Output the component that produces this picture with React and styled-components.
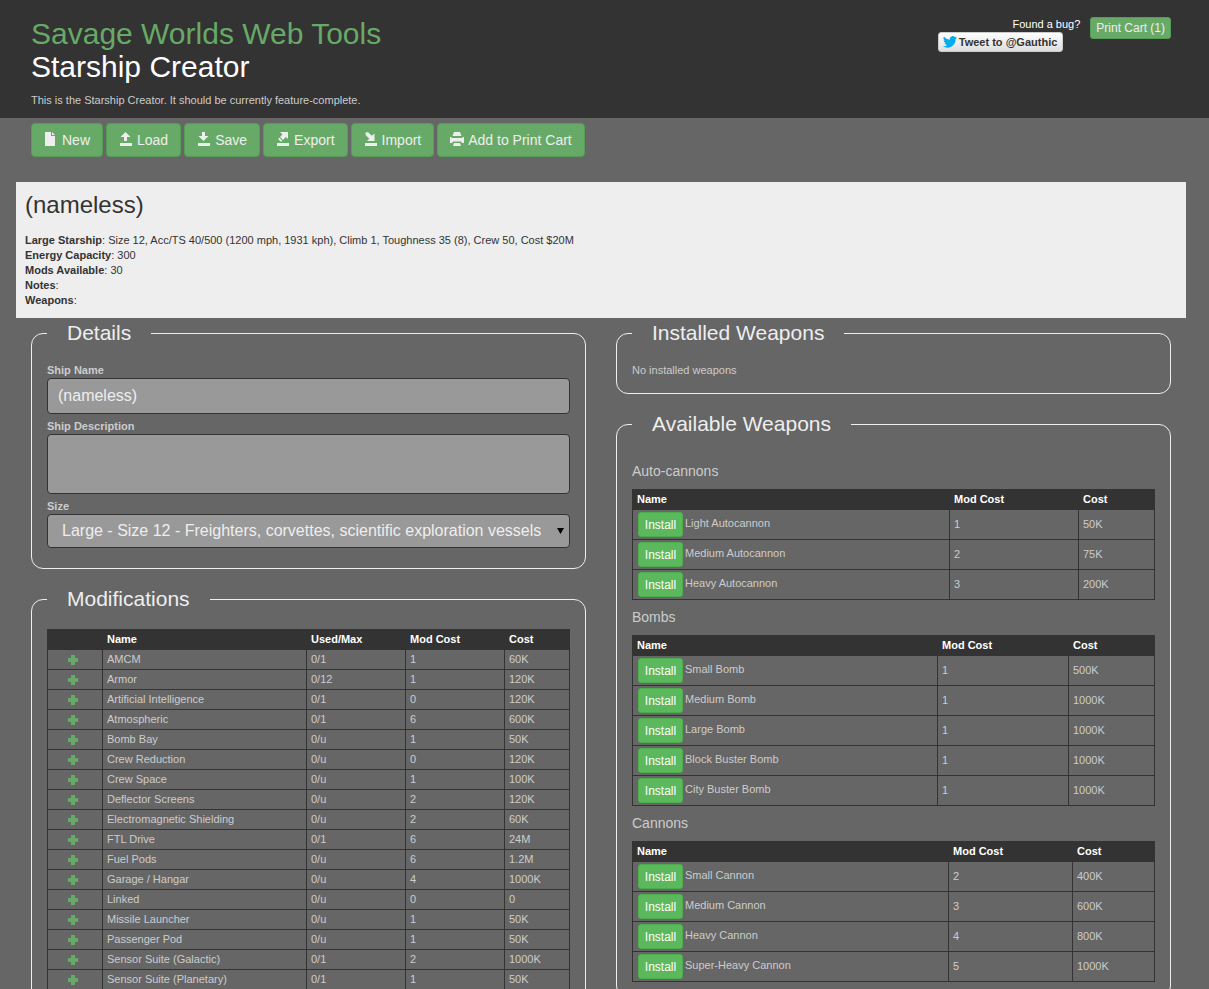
import React, { useState } from 'react';
import styled, { createGlobalStyle } from 'styled-components';

const GlobalStyle = createGlobalStyle`
  * {
    box-sizing: border-box;
  }

  body {
    margin: 0;
    background-color: #666;
    color: #ccc;
    font-family: "Liberation Sans", Arial, sans-serif;
    font-size: 11px;
    line-height: 15px;
  }
`;

const Header = styled.header`
  display: flex;
  justify-content: space-between;
  align-items: flex-start;
  background-color: #333;
  padding: 17px 38px 10px 31px;
`;

const Title = styled.h1`
  margin: 0 0 10px;
  color: #fff;
  font-size: 30px;
  font-weight: 400;
  line-height: 33px;
`;

const SiteLink = styled.a`
  display: block;
  color: #67aa67;
  text-decoration: none;
`;

const Text = styled.p`
  margin: 0;
`;

const HeaderTools = styled.div`
  display: flex;
  align-items: flex-start;
  gap: 10px;
`;

const BugReport = styled.div`
  display: flex;
  flex-direction: column;
  align-items: flex-end;
  color: #fff;
`;

const TweetLink = styled.a`
  display: flex;
  align-items: center;
  gap: 2px;
  height: 20px;
  margin-right: 17px;
  padding: 0 5px 0 4px;
  border: 1px solid #ccc;
  border-radius: 3px;
  background-image: linear-gradient(#fff, #dedede);
  color: #333;
  font-weight: 700;
  text-decoration: none;
`;

const Button = styled.button`
  display: inline-flex;
  align-items: center;
  gap: 4px;
  padding: ${(props) => (props.$small ? '1px 5px' : '6px 12px')};
  border: 1px solid #559c55;
  border-radius: ${(props) => (props.$small ? '3px' : '4px')};
  background-color: #67aa67;
  color: #eee;
  font-family: inherit;
  font-size: ${(props) => (props.$small ? '12px' : '14px')};
  line-height: ${(props) => (props.$small ? '18px' : '20px')};
  cursor: pointer;
`;

const ButtonIcon = styled.svg`
  margin-bottom: 2px;
`;

const Container = styled.main`
  padding: 0 23px 0 16px;
`;

const Toolbar = styled.div`
  display: flex;
  flex-wrap: wrap;
  gap: 3px;
  padding: 5px 15px 25px;
`;

const Summary = styled.section`
  padding: 10px 9px;
  background-color: #eee;
  color: #333;
`;

const ShipName = styled.h3`
  margin: 0 0 15px;
  font-size: 24px;
  font-weight: 400;
  line-height: 26px;
`;

const Columns = styled.div`
  display: grid;
  grid-template-columns: 1fr 1fr;
  gap: 30px;
  padding: 0 15px;
`;

const Panel = styled.fieldset`
  min-width: 0;
  margin: 0 0 15px;
  padding: 0 15px ${(props) => props.$bottom || 15}px;
  border: 1px solid #eee;
  border-radius: 12px;
`;

const Legend = styled.legend`
  margin-bottom: 15px;
  padding: 0 20px;
  color: #eee;
  font-size: 21px;
  line-height: 30px;
`;

const Label = styled.label`
  display: block;
  font-weight: 700;
`;

const TextInput = styled.input`
  display: block;
  width: 100%;
  height: 36px;
  margin-bottom: 5px;
  padding: 6px 10px;
  border: 1px solid #333;
  border-radius: 4px;
  background-color: #999;
  color: #eee;
  font-family: inherit;
  font-size: 16px;
`;

const TextArea = styled(TextInput)`
  height: 60px;
  resize: none;
`;

const SelectWrap = styled.div`
  position: relative;
`;

const Select = styled(TextInput)`
  height: 34px;
  margin-bottom: 0;
  padding: 0 28px 2px 14px;
  appearance: none;
`;

const SelectArrow = styled.svg`
  position: absolute;
  top: 14px;
  right: 6px;
  pointer-events: none;
`;

const GroupTitle = styled.h4`
  margin: 10px 0;
  font-size: 14px;
  font-weight: 400;
  line-height: 15px;
`;

const Table = styled.table`
  width: 100%;
  table-layout: fixed;
  border-collapse: collapse;
`;

const Col = styled.col`
  width: ${(props) => props.$width};
`;

const Th = styled.th`
  padding: 2px 4px;
  border: 1px solid #333;
  background-color: #333;
  color: #fff;
  text-align: left;
`;

const Td = styled.td`
  padding: 2px 4px;
  border: 1px solid #333;
`;

const AddCell = styled(Td)`
  padding: 0 5px 0 0;
`;

const AddButton = styled.button`
  display: flex;
  margin: 0 auto;
  padding: 0;
  border: 0;
  background: none;
  color: #67aa67;
  cursor: pointer;
`;

const WeaponCell = styled.div`
  display: flex;
  align-items: flex-start;
  gap: 2px;
  padding-left: 1px;
  line-height: 23px;
`;

const InstallButton = styled.button`
  min-width: 45px;
  height: 25px;
  padding: 0 5px;
  border: 1px solid #4cae4c;
  border-radius: 3px;
  background-color: #5cb85c;
  color: #fff;
  font-family: inherit;
  font-size: 12px;
  cursor: pointer;
`;

const iconPaths = {
  file: 'M1 0h6v4h4v10H1zM8 0l3 3H8z',
  load: 'M6.500 0l5 5H8v4H5V5H1.500zM1 11h12v3H1z',
  save: 'M5 0h3v4h3.500L6.500 9 1.500 4H5zM1 11h12v3H1z',
  export: 'M4 0h8v7L9.800 5 7 8 4 5l2.500-2.500zM3.300 5.700l3 3-.8.800H4.500L2.300 7.300V6.700zM1 11h12v3H1z',
  import: 'M3.800 0l4 3.800L10.500 1.500V9H3l2.300-2.300L1.500 3zM1 1.500L2.500 0l.8.800-1.500 1.500zM1 11h12v3H1z',
  print: 'M4 0h6l1.500 4h-9zM0 5h1.500v1h11V5H14v6h-2l-1-1.500H3L2 11H0zM4 11h6l1 3H3z',
};

const Icon = ({ name }) => (
  <ButtonIcon width="14" height="14" viewBox="0 0 14 14" fill="currentColor" aria-hidden="true">
    <path d={iconPaths[name]} />
  </ButtonIcon>
);

const toolbarButtons = [
  { icon: 'file', label: 'New' },
  { icon: 'load', label: 'Load' },
  { icon: 'save', label: 'Save' },
  { icon: 'export', label: 'Export' },
  { icon: 'import', label: 'Import' },
  { icon: 'print', label: 'Add to Print Cart' },
];

const modifications = [
  ['AMCM', '0/1', '1', '60K'],
  ['Armor', '0/12', '1', '120K'],
  ['Artificial Intelligence', '0/1', '0', '120K'],
  ['Atmospheric', '0/1', '6', '600K'],
  ['Bomb Bay', '0/u', '1', '50K'],
  ['Crew Reduction', '0/u', '0', '120K'],
  ['Crew Space', '0/u', '1', '100K'],
  ['Deflector Screens', '0/u', '2', '120K'],
  ['Electromagnetic Shielding', '0/u', '2', '60K'],
  ['FTL Drive', '0/1', '6', '24M'],
  ['Fuel Pods', '0/u', '6', '1.2M'],
  ['Garage / Hangar', '0/u', '4', '1000K'],
  ['Linked', '0/u', '0', '0'],
  ['Missile Launcher', '0/u', '1', '50K'],
  ['Passenger Pod', '0/u', '1', '50K'],
  ['Sensor Suite (Galactic)', '0/1', '2', '1000K'],
  ['Sensor Suite (Planetary)', '0/1', '1', '50K'],
];

const weaponGroups = [
  {
    title: 'Auto-cannons',
    widths: ['317px', '129px', '76px'],
    weapons: [
      ['Light Autocannon', '1', '50K'],
      ['Medium Autocannon', '2', '75K'],
      ['Heavy Autocannon', '3', '200K'],
    ],
  },
  {
    title: 'Bombs',
    widths: ['305px', '131px', '86px'],
    weapons: [
      ['Small Bomb', '1', '500K'],
      ['Medium Bomb', '1', '1000K'],
      ['Large Bomb', '1', '1000K'],
      ['Block Buster Bomb', '1', '1000K'],
      ['City Buster Bomb', '1', '1000K'],
    ],
  },
  {
    title: 'Cannons',
    widths: ['316px', '124px', '82px'],
    weapons: [
      ['Small Cannon', '2', '400K'],
      ['Medium Cannon', '3', '600K'],
      ['Heavy Cannon', '4', '800K'],
      ['Super-Heavy Cannon', '5', '1000K'],
    ],
  },
];

const ModificationsTable = () => (
  <Table>
    <colgroup>
      <Col $width="55px" />
      <Col $width="204px" />
      <Col $width="99px" />
      <Col $width="99px" />
      <Col $width="65px" />
    </colgroup>
    <thead>
      <tr>
        <Th />
        <Th>Name</Th>
        <Th>Used/Max</Th>
        <Th>Mod Cost</Th>
        <Th>Cost</Th>
      </tr>
    </thead>
    <tbody>
      {modifications.map(([name, used, modCost, cost]) => (
        <tr key={name}>
          <AddCell>
            <AddButton type="button" aria-label={`Add ${name}`}>
              <svg width="10" height="10" viewBox="0 0 10 10" fill="currentColor">
                <path d="M3 0h4v3h3v4H7v3H3V7H0V3h3z" />
              </svg>
            </AddButton>
          </AddCell>
          <Td>{name}</Td>
          <Td>{used}</Td>
          <Td>{modCost}</Td>
          <Td>{cost}</Td>
        </tr>
      ))}
    </tbody>
  </Table>
);

const WeaponsTable = ({ group }) => (
  <>
    <GroupTitle>{group.title}</GroupTitle>
    <Table>
      <colgroup>
        {group.widths.map((width, index) => (
          <Col key={index} $width={width} />
        ))}
      </colgroup>
      <thead>
        <tr>
          <Th>Name</Th>
          <Th>Mod Cost</Th>
          <Th>Cost</Th>
        </tr>
      </thead>
      <tbody>
        {group.weapons.map(([name, modCost, cost]) => (
          <tr key={name}>
            <Td>
              <WeaponCell>
                <InstallButton type="button">Install</InstallButton>
                <span>{name}</span>
              </WeaponCell>
            </Td>
            <Td>{modCost}</Td>
            <Td>{cost}</Td>
          </tr>
        ))}
      </tbody>
    </Table>
  </>
);

const App = () => {
  const [name, setName] = useState('(nameless)');
  const [description, setDescription] = useState('');

  return (
    <>
      <GlobalStyle />
      <Header>
        <div>
          <Title>
            <SiteLink href="#">Savage Worlds Web Tools</SiteLink>
            Starship Creator
          </Title>
          <Text>This is the Starship Creator. It should be currently feature-complete.</Text>
        </div>
        <HeaderTools>
          <BugReport>
            <span>Found a bug?</span>
            <TweetLink href="#">
              <svg width="14" height="12" viewBox="0 0 24 20" fill="#00aced" aria-hidden="true">
                <path d="M24 2.400a10 10 0 0 1-2.800.800A5 5 0 0 0 23.300.400a10 10 0 0 1-3.100 1.200A4.900 4.900 0 0 0 11.800 6 14 14 0 0 1 1.700.900a4.900 4.900 0 0 0 1.500 6.600A4.900 4.900 0 0 1 1 6.900a4.900 4.900 0 0 0 3.900 4.900 5 5 0 0 1-2.200.1 4.900 4.900 0 0 0 4.600 3.400A9.900 9.900 0 0 1 0 17.300 14 14 0 0 0 21.500 4.900 10 10 0 0 0 24 2.400z" />
              </svg>
              Tweet to @Gauthic
            </TweetLink>
          </BugReport>
          <Button type="button" $small>Print Cart (1)</Button>
        </HeaderTools>
      </Header>
      <Container>
        <Toolbar>
          {toolbarButtons.map((button) => (
            <Button key={button.label} type="button">
              <Icon name={button.icon} />
              {button.label}
            </Button>
          ))}
        </Toolbar>
        <Summary>
          <ShipName>{name}</ShipName>
          <Text><strong>Large Starship</strong>: Size 12, Acc/TS 40/500 (1200 mph, 1931 kph), Climb 1, Toughness 35 (8), Crew 50, Cost $20M</Text>
          <Text><strong>Energy Capacity</strong>: 300</Text>
          <Text><strong>Mods Available</strong>: 30</Text>
          <Text><strong>Notes</strong>: {description}</Text>
          <Text><strong>Weapons</strong>: </Text>
        </Summary>
        <Columns>
          <div>
            <Panel $bottom={20}>
              <Legend>Details</Legend>
              <Label htmlFor="ship-name">Ship Name</Label>
              <TextInput id="ship-name" type="text" value={name} onChange={(e) => setName(e.target.value)} />
              <Label htmlFor="ship-description">Ship Description</Label>
              <TextArea
                as="textarea"
                id="ship-description"
                value={description}
                onChange={(e) => setDescription(e.target.value)}
              />
              <Label htmlFor="ship-size">Size</Label>
              <SelectWrap>
                <Select as="select" id="ship-size">
                  <option>Large - Size 12 - Freighters, corvettes, scientific exploration vessels</option>
                </Select>
                <SelectArrow width="7" height="6" viewBox="0 0 7 6" aria-hidden="true">
                  <path d="M0 0h7L3.500 6z" />
                </SelectArrow>
              </SelectWrap>
            </Panel>
            <Panel>
              <Legend>Modifications</Legend>
              <ModificationsTable />
            </Panel>
          </div>
          <div>
            <Panel>
              <Legend>Installed Weapons</Legend>
              <Text>No installed weapons</Text>
            </Panel>
            <Panel>
              <Legend>Available Weapons</Legend>
              {weaponGroups.map((group) => (
                <WeaponsTable key={group.title} group={group} />
              ))}
            </Panel>
          </div>
        </Columns>
      </Container>
    </>
  );
};

export default App;
